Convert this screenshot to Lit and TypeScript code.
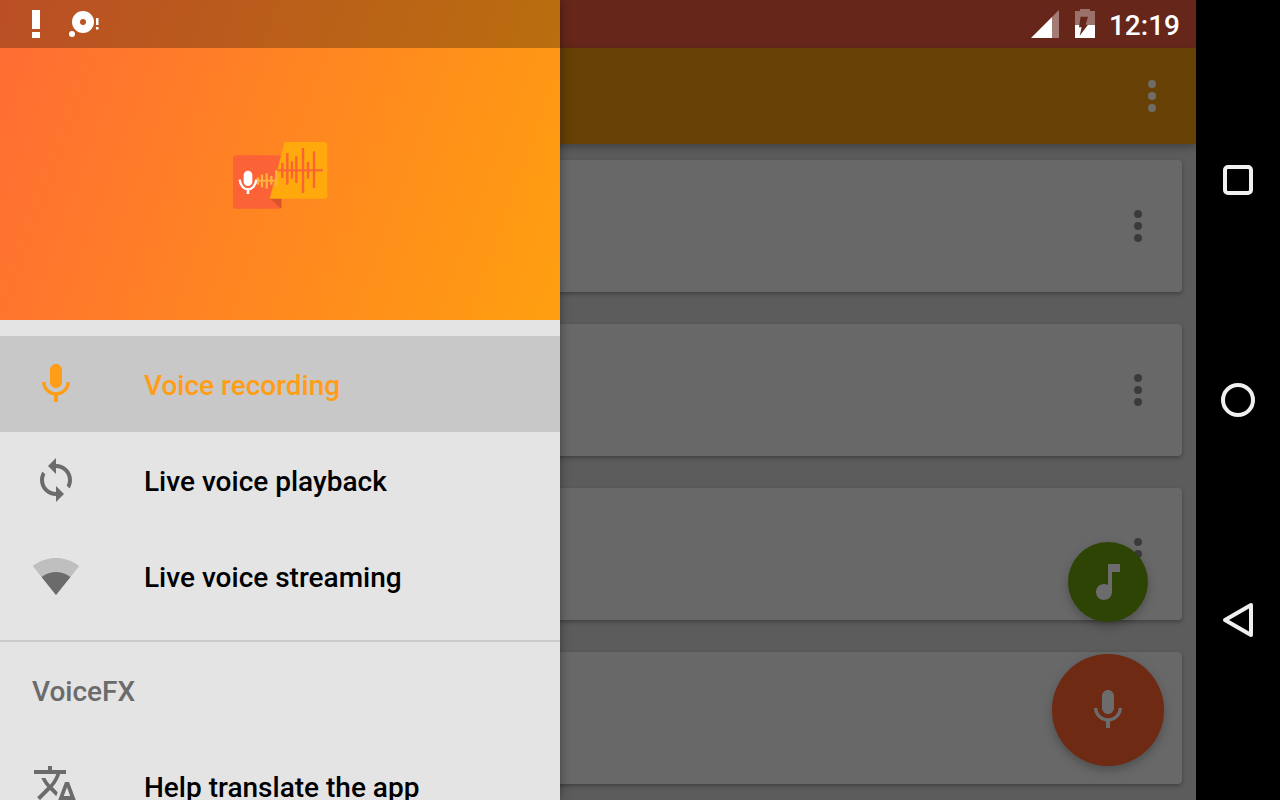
import { LitElement, html, css, svg } from "lit";
import { customElement } from "lit/decorators.js";

const MIC = "M12 14c1.66 0 2.99-1.34 2.99-3L15 5c0-1.66-1.34-3-3-3S9 3.34 9 5v6c0 1.66 1.34 3 3 3zm5.3-3c0 3-2.54 5.1-5.3 5.1S6.7 14 6.7 11H5c0 3.41 2.72 6.23 6 6.72V21h2v-3.28c3.28-.48 6-3.3 6-6.72h-1.7z";
const SYNC = "M12 4V1L8 5l4 4V6c3.31 0 6 2.69 6 6 0 1.01-.25 1.97-.7 2.8l1.46 1.46C19.54 15.03 20 13.57 20 12c0-4.42-3.58-8-8-8zm0 14c-3.31 0-6-2.69-6-6 0-1.01.25-1.97.7-2.8L5.24 7.74C4.46 8.97 4 10.43 4 12c0 4.42 3.58 8 8 8v3l4-4-4-4v3z";
const TRANSLATE = "M12.87 15.07l-2.54-2.51.03-.03c1.74-1.94 2.98-4.17 3.71-6.53H17V4h-7V2H8v2H1v1.99h11.17C11.5 7.92 10.44 9.75 9 11.35 8.07 10.32 7.3 9.19 6.69 8h-2c.73 1.63 1.73 3.17 2.98 4.56l-5.09 5.02L4 19l5-5 3.11 3.11.76-2.04zM18.5 10h-2L12 22h2l1.12-3h4.75L21 22h2l-4.5-12zm-2.62 7l1.62-4.33L19.12 17h-3.24z";
const NOTE = "M12 3v10.55c-.59-.34-1.27-.55-2-.55-2.21 0-4 1.79-4 4s1.79 4 4 4 4-1.79 4-4V7h4V3h-6z";

const icon = (d: string) => html`<svg class="ic" viewBox="0 0 24 24"><path d=${d} fill="currentColor"></path></svg>`;

const dots = () => html`<svg class="dots" viewBox="0 0 48 48" fill="currentColor">
  <circle cx="24" cy="12" r="4"></circle><circle cx="24" cy="24" r="4"></circle><circle cx="24" cy="36" r="4"></circle>
</svg>`;

const wifi = () => html`<svg class="ic" viewBox="0 0 24 24" fill="currentColor">
  <path opacity=".3" d="M12.01 21.49L23.64 7c-.45-.34-4.93-4-11.64-4C5.28 3 .81 6.66.36 7l11.63 14.49.01.01.01-.01z"></path>
  <path d="M4.79 12.52l7.2 8.98H12l.01-.01 7.2-8.98C18.85 12.24 16.1 10 12 10s-6.85 2.24-7.21 2.52z"></path>
</svg>`;

// waveform bars in logo coords (3x of real pixels): [x, y1, y2]
const redBars = [[163,75,120],[178,45,140],[192,70,122],[205,55,135],[225,30,165],[240,72,122],[258,40,150]];
const yellowBars = [[90,118,140],[102,110,148],[116,106,152],[130,114,140],[145,96,145]];

const logo = () => html`<svg class="logo" viewBox="0 0 312 228">
  <rect x="15" y="52" width="145" height="160" rx="9" fill="#fb6236"></rect>
  <path d="M125 180L160 180V212z" fill="#d8542c"></path>
  <path d="M170 12H288a10 10 0 0 1 10 10V172a10 10 0 0 1-10 10H125z" fill="#ffa90d"></path>
  ${yellowBars.map(([x, a, b]) => svg`<rect x=${x - 3.5} y=${a} width="7" height=${b - a} fill="#ffb23c"></rect>`)}
  <rect x="85" y="125" width="62" height="6" fill="#ffb23c"></rect>
  ${redBars.map(([x, a, b]) => svg`<rect x=${x - 3.5} y=${a} width="7" height=${b - a} fill="#fb6236"></rect>`)}
  <rect x="148" y="94" width="137" height="6" fill="#fb6236"></rect>
  <rect x="47" y="98" width="26" height="46" rx="13" fill="#fff"></rect>
  <path d="M35 125c2 20 14 29 25 29s23-9 25-29" fill="none" stroke="#fff" stroke-width="7"></path>
  <rect x="56" y="152" width="8" height="16" fill="#fff"></rect>
</svg>`;

@customElement("app-root")
export class AppRoot extends LitElement {
  static styles = css`
    :host {
      display: block;
      position: relative;
      width: 1280px;
      height: 800px;
      overflow: hidden;
      font-family: Roboto, "Liberation Sans", sans-serif;
      font-weight: 500;
      font-size: 28px;
    }
    .screen { display: flex; height: 100%; }
    .main { flex: 1; display: flex; flex-direction: column; background: #5c5c5c; min-width: 0; }
    .status {
      height: 48px;
      background: #66271a;
      display: flex;
      align-items: center;
      justify-content: flex-end;
      padding-right: 16px;
      color: #fff;
    }
    .signal { width: 30px; height: 30px; margin-right: 15px; }
    .battery { width: 20px; height: 30px; margin-right: 14px; }
    .clock { line-height: 48px; padding-top: 4px; }
    .appbar {
      height: 96px;
      background: #664005;
      display: flex;
      align-items: center;
      justify-content: flex-end;
      padding-right: 20px;
      color: #6f6b66;
      box-shadow: 0 3px 8px rgba(0, 0, 0, .3);
      position: relative;
    }
    .dots { width: 48px; height: 48px; display: block; }
    .list { display: flex; flex-direction: column; gap: 32px; padding: 16px 14px; }
    .card {
      height: 132px;
      flex: none;
      background: #686868;
      border-radius: 4px;
      box-shadow: 0 2px 4px rgba(0, 0, 0, .3);
      display: flex;
      align-items: center;
      justify-content: flex-end;
      padding-right: 20px;
      color: #3b3b3b;
    }
    .nav {
      width: 84px;
      flex: none;
      background: #000;
      display: flex;
      flex-direction: column;
      align-items: center;
      justify-content: center;
      gap: 172px;
    }
    .nav svg { width: 48px; height: 48px; display: block; fill: none; stroke: #f0f0f0; stroke-width: 4; stroke-linejoin: round; }
    .fab {
      position: absolute;
      border-radius: 50%;
      display: flex;
      align-items: center;
      justify-content: center;
      color: #6c6c6c;
      box-shadow: 0 4px 10px rgba(0, 0, 0, .25);
    }
    .fab .ic { width: 48px; height: 48px; }
    .fab-music { width: 80px; height: 80px; right: 132px; bottom: 178px; background: #2e4404; }
    .fab-mic { width: 112px; height: 112px; right: 116px; bottom: 34px; background: #6f2a14; }
    .drawer {
      position: absolute;
      left: 0;
      top: 0;
      bottom: 0;
      width: 560px;
      background: #e4e4e4;
      overflow: hidden;
      box-shadow: 0 0 10px rgba(0, 0, 0, .4);
    }
    .header {
      height: 320px;
      display: flex;
      flex-direction: column;
      background: linear-gradient(110deg, #ff6c34, #ff9f0f);
    }
    .notif {
      height: 48px;
      flex: none;
      background: rgba(0, 0, 0, .27);
      display: flex;
      align-items: center;
      padding-left: 20px;
    }
    .notif svg { width: 32px; height: 48px; display: block; }
    .notif svg + svg { width: 48px; margin-left: 12px; }
    .brand { flex: 1; display: flex; align-items: center; justify-content: center; padding-bottom: 16px; }
    .logo { width: 104px; height: 76px; display: block; }
    .menu { padding: 16px 0; border-bottom: 2px solid #cbcbcb; }
    .row { height: 96px; display: flex; align-items: center; color: #000; }
    .row span { padding-top: 2px; }
    .row .ic { width: 48px; height: 48px; margin-left: 32px; margin-right: 64px; color: #6b6b6b; flex: none; display: block; }
    .row.on { background: #c8c8c8; color: #ff9e16; }
    .row.on .ic { color: #ff9e16; }
    .section { height: 96px; display: flex; align-items: center; padding: 2px 0 0 32px; box-sizing: border-box; color: #6b6b6b; }
  `;

  render() {
    return html`
      <div class="screen">
        <div class="main">
          <div class="status">
            <svg class="signal" viewBox="0 0 30 30">
              <path d="M29 1V29H22V8z" fill="#fff" opacity=".4"></path>
              <path d="M1 29L22 8V29z" fill="#fff"></path>
            </svg>
            <svg class="battery" viewBox="0 0 20 30">
              <path d="M5 0h10v2h5v27H0V2h5z" fill="#fff" opacity=".35"></path>
              <path d="M0 16h20v13H0z" fill="#fff"></path>
              <path d="M5.6 7.7H13L10.6 15.7H13L4.7 26.7L6.6 18.3H4z" fill="#66271a"></path>
            </svg>
            <span class="clock">12:19</span>
          </div>
          <div class="appbar">${dots()}</div>
          <div class="list">
            ${[0, 1, 2, 3].map(() => html`<div class="card">${dots()}</div>`)}
          </div>
        </div>
        <div class="nav">
          <svg viewBox="0 0 48 48"><rect x="11" y="11" width="26" height="26" rx="3"></rect></svg>
          <svg viewBox="0 0 48 48"><circle cx="24" cy="24" r="15"></circle></svg>
          <svg viewBox="0 0 48 48"><path d="M37 9V39L11 24z"></path></svg>
        </div>
      </div>
      <div class="fab fab-music">${icon(NOTE)}</div>
      <div class="fab fab-mic">${icon(MIC)}</div>
      <div class="drawer">
        <div class="header">
          <div class="notif">
            <svg viewBox="0 0 32 48" fill="#fff">
              <rect x="12" y="10" width="8" height="19"></rect>
              <rect x="12" y="32" width="8" height="6"></rect>
            </svg>
            <svg viewBox="0 0 48 48" fill="#fff">
              <path fill-rule="evenodd" d="M19 11a11 11 0 1 1 0 22a11 11 0 0 1 0-22zM19 19a3 3 0 1 0 0 6a3 3 0 0 0 0-6z"></path>
              <circle cx="8" cy="34" r="3"></circle>
              <rect x="32" y="18" width="2.5" height="7"></rect>
              <rect x="32" y="27" width="2.5" height="2.5"></rect>
            </svg>
          </div>
          <div class="brand">${logo()}</div>
        </div>
        <div class="menu">
          <div class="row on">${icon(MIC)}<span>Voice recording</span></div>
          <div class="row">${icon(SYNC)}<span>Live voice playback</span></div>
          <div class="row">${wifi()}<span>Live voice streaming</span></div>
        </div>
        <div class="section">VoiceFX</div>
        <div class="row">${icon(TRANSLATE)}<span>Help translate the app</span></div>
      </div>
    `;
  }
}
